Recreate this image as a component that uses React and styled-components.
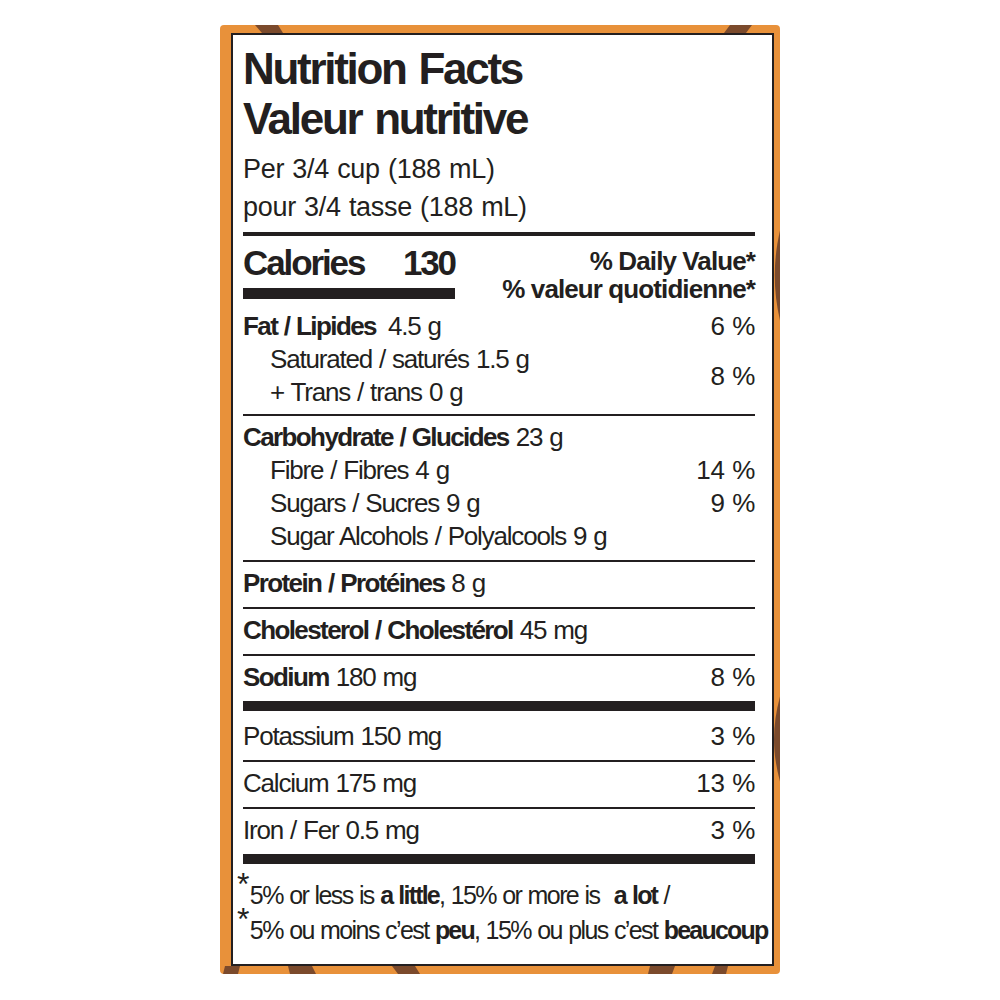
import React from "react";
import styled, { createGlobalStyle } from "styled-components";

const FONT = '"Liberation Sans", Arial, sans-serif';
const INK = "#231f20";

const Global = createGlobalStyle`
  html, body { margin: 0; padding: 0; background: #ffffff; }
  body { font-family: ${FONT}; color: ${INK}; }
`;

const Page = styled.div`
  display: flex;
  justify-content: center;
  padding-top: 25px;
`;

const Frame = styled.div`
  position: relative;
  width: 560px;
  box-sizing: border-box;
  padding: 8px 6px 8px 11px;
  background: #e8913a;
  border-radius: 4px;
  overflow: hidden;
`;

const Stripes = styled.svg`
  position: absolute;
  inset: 0;
  width: 100%;
  height: 100%;
`;

const Panel = styled.div`
  position: relative;
  background: #ffffff;
  border: 2px solid ${INK};
  padding: 9px 17px 16px 10px;
`;

const Title = styled.h1`
  margin: 0;
  font-size: 44px;
  line-height: 50px;
  font-weight: 700;
  letter-spacing: -2.3px;
  word-spacing: 3px;
`;

const Serving = styled.div`
  margin-top: 6px;
  font-size: 27px;
  line-height: 38px;
  letter-spacing: -0.3px;
  word-spacing: 1px;
`;

const Rule = styled.div`
  height: ${(p) => p.$h}px;
  background: ${INK};
  margin-top: ${(p) => p.$mt || 0}px;
`;

const CalSection = styled.div`
  display: flex;
  justify-content: space-between;
  align-items: flex-start;
  padding-top: 7px;
`;

const CalLeft = styled.div`
  width: 212px;
`;

const CalLine = styled.div`
  display: flex;
  justify-content: space-between;
  font-size: 35px;
  line-height: 40px;
  font-weight: 700;
  letter-spacing: -2.1px;
`;

const DVHead = styled.div`
  margin-top: 4px;
  text-align: right;
  font-size: 26px;
  line-height: 28px;
  font-weight: 700;
  letter-spacing: -0.9px;
`;

const Group = styled.div`
  display: grid;
  grid-template-columns: 1fr auto;
  font-size: 26px;
  line-height: 33px;
  letter-spacing: -1.2px;
  word-spacing: 1px;
  padding: ${(p) => p.$pt}px 0 ${(p) => p.$pb}px;
`;

const Line = styled.div`
  grid-column: 1;
  padding-left: ${(p) => (p.$indent ? 27 : 0)}px;
  white-space: nowrap;
`;

const Pct = styled.div`
  grid-column: 2;
  grid-row: span ${(p) => p.$span || 1};
  align-self: center;
  text-align: right;
  white-space: nowrap;
  letter-spacing: -0.4px;
`;

const B = styled.b`
  font-weight: 700;
  letter-spacing: -1.6px;
`;

const Gap = styled.span`
  margin-left: ${(p) => p.$w}px;
`;

const Foot = styled.div`
  padding-top: 14px;
  font-size: 25px;
  line-height: 35px;
  letter-spacing: -1.6px;
  word-spacing: 1px;
  white-space: nowrap;

  ${B} {
    letter-spacing: -1.8px;
  }
`;

const Star = styled.span`
  display: inline-block;
  margin-left: -6px;
  margin-right: 2px;
  font-size: 32px;
  line-height: 0;
  position: relative;
  top: -9px;
`;

function Single({ children, pct, pt = 5, pb = 7 }) {
  return (
    <Group $pt={pt} $pb={pb}>
      <Line>{children}</Line>
      {pct && <Pct>{pct}</Pct>}
    </Group>
  );
}

export default function App() {
  return (
    <>
      <Global />
      <Page>
        <Frame>
          <Stripes viewBox="0 0 560 947" preserveAspectRatio="none">
            <g fill="#7b4a2c">
              <polygon points="35,0 58,0 63,8 42,8" />
              <polygon points="510,0 532,0 526,8 504,8" />
              <path d="M560,205 C553,235 553,265 560,295 Z" />
              <path d="M560,670 C552,700 552,725 560,755 Z" />
              <polygon points="5,939 20,939 18,947 3,947" />
              <polygon points="68,939 92,939 96,947 70,947" />
              <polygon points="172,939 195,939 200,947 178,947" />
              <polygon points="430,939 455,939 452,947 428,947" />
              <polygon points="495,939 508,939 506,947 492,947" />
            </g>
          </Stripes>
          <Panel>
            <Title>
              Nutrition Facts
              <br />
              Valeur nutritive
            </Title>
            <Serving>
              Per 3/4 cup (188 mL)
              <br />
              pour 3/4 tasse (188 mL)
            </Serving>
            <Rule $h={4} $mt={6} />
            <CalSection>
              <CalLeft>
                <CalLine>
                  <span>Calories</span>
                  <span>130</span>
                </CalLine>
                <Rule $h={11} $mt={5} />
              </CalLeft>
              <DVHead>
                % Daily Value*
                <br />% valeur quotidienne*
              </DVHead>
            </CalSection>

            <Group $pt={7} $pb={5}>
              <Line>
                <B>Fat / Lipides</B>
                <Gap $w={12}>4.5 g</Gap>
              </Line>
              <Pct>6 %</Pct>
              <Line $indent>Saturated / saturés 1.5 g</Line>
              <Pct $span={2}>8 %</Pct>
              <Line $indent>+ Trans / trans 0 g</Line>
            </Group>
            <Rule $h={2} />
            <Group $pt={5} $pb={7}>
              <Line>
                <B>Carbohydrate / Glucides</B> 23 g
              </Line>
              <Line $indent>Fibre / Fibres 4 g</Line>
              <Pct>14 %</Pct>
              <Line $indent>Sugars / Sucres 9 g</Line>
              <Pct>9 %</Pct>
              <Line $indent>Sugar Alcohols / Polyalcools 9 g</Line>
            </Group>
            <Rule $h={2} />
            <Single>
              <B>Protein / Protéines</B> 8 g
            </Single>
            <Rule $h={2} />
            <Single>
              <B>Cholesterol / Cholestérol</B> 45 mg
            </Single>
            <Rule $h={2} />
            <Single pct="8 %">
              <B>Sodium</B> 180 mg
            </Single>
            <Rule $h={10} />
            <Single pct="3 %" pt={9}>
              Potassium 150 mg
            </Single>
            <Rule $h={2} />
            <Single pct="13 %">Calcium 175 mg</Single>
            <Rule $h={2} />
            <Single pct="3 %">Iron / Fer 0.5 mg</Single>
            <Rule $h={10} />
            <Foot>
              <Star>*</Star>5% or less is <B>a little</B>, 15% or more is{" "}
              <Gap $w={8}>
                <B>a lot</B> /
              </Gap>
              <br />
              <Star>*</Star>5% ou moins c’est <B>peu</B>, 15% ou plus c’est{" "}
              <B>beaucoup</B>
            </Foot>
          </Panel>
        </Frame>
      </Page>
    </>
  );
}
